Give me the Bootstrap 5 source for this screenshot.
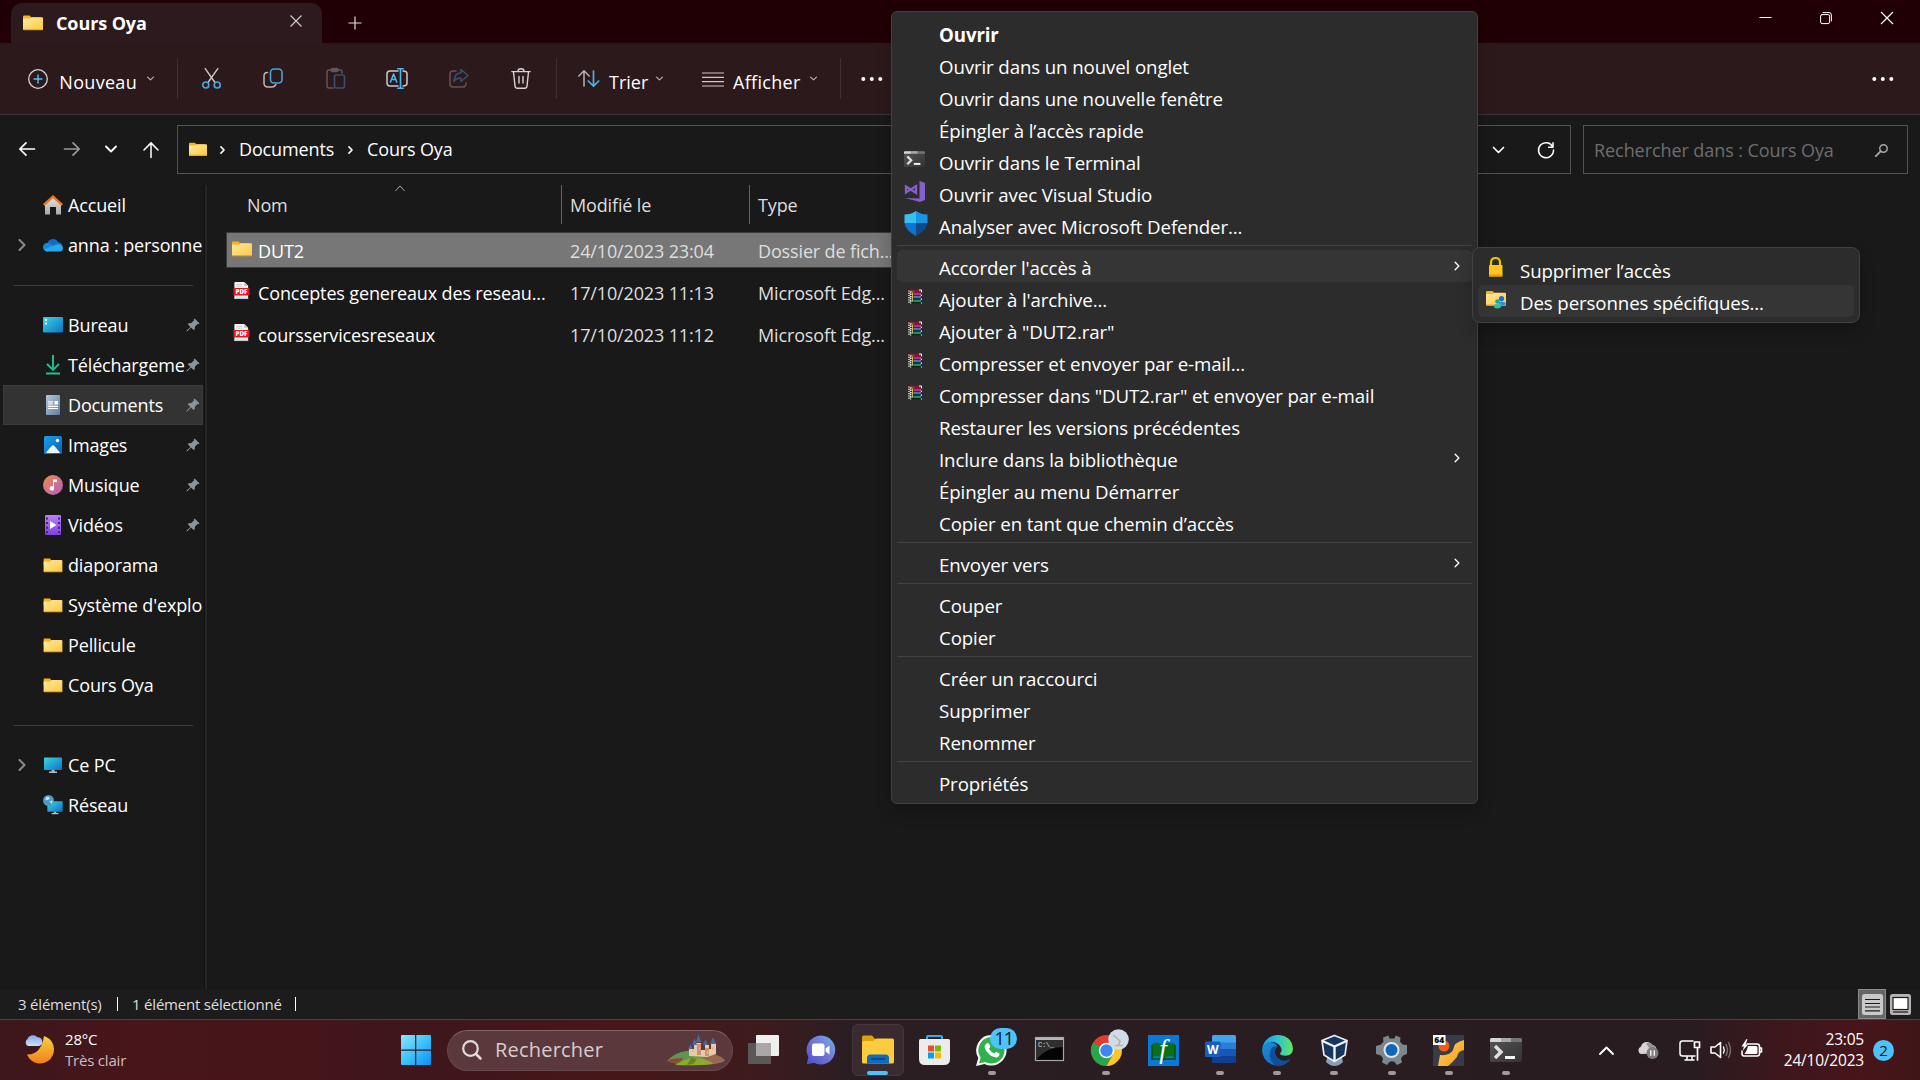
<!DOCTYPE html>
<html lang="fr" data-bs-theme="dark">
<head>
<meta charset="utf-8">
<title>Cours Oya</title>
<link rel="stylesheet" href="https://cdn.jsdelivr.net/npm/bootstrap@5.3.0/dist/css/bootstrap.min.css">
<style>
body{width:1920px;height:1080px;overflow:hidden;background:#191919;color:#fff;font-family:"Open Sans","Noto Sans",sans-serif;font-size:18px;line-height:24px;letter-spacing:-.14px;white-space:nowrap}
svg{display:block;flex:none;overflow:visible}
.ln{fill:none;stroke:currentColor;stroke-linecap:round;stroke-linejoin:round}
.titlebar{height:43px;background:#200004;padding-left:11px}
.tab-strip{height:43px}
.tab-active{width:311px;height:40px;background:#2c1a1e;border-radius:11px 11px 0 0;padding:0 20px 0 12px}
.tab-title{font-weight:700;font-size:18px;padding-bottom:1px;margin-left:13px;letter-spacing:-.1px}
.tab-new{margin:0 0 13px 26px}
.win-ctl{width:61px;height:36px}
.toolbar{height:72px;background:#2c191c;border-bottom:1px solid #3b3637}
.tool{width:62px}
.vsep{width:1px;height:41px;background:#40302f}
.tool-label{font-weight:500;padding-top:7px;letter-spacing:.3px}
.dim{opacity:.38}
.addr-row{height:70px;padding-top:10px}
.box-line{height:49px;border:1px solid #535353}
.crumb-bar{width:1394px}
.crumb-bar span{padding-bottom:2px}
.search-bar{width:325px;color:#6e6e6e}
.side{width:204px;height:804px;padding-left:3px}
.side-edge{width:3px;background:#262626;border-left:1px solid #111}
.side-row{height:40px;width:200px;padding-left:40px}
.side-row.active{background:#333;border:1px solid #3b3b3b;padding-left:39px}
.side-row .twist{width:14px;margin-left:-25px;margin-right:11px}
.side-row .pinned{margin-right:3px}
.side-row.active .pinned{margin-right:2px}
.ic{width:20px;margin-right:5px}
.side-sep{height:40px;padding-top:20px;padding-left:10px}
.side-sep i{display:block;width:180px;height:1px;background:#3c3c3c}
.list{padding-left:19px;width:940px}
.head-row{height:39px;color:#dedede}
.head-row .c1{padding-left:21px;width:336px;border-right:1px solid #636363;height:39px;padding-top:8px}
.head-row .c2{width:188px;border-right:1px solid #636363;padding-left:8px;padding-top:8px;height:39px}
.head-row .c3{padding-left:8px;padding-top:8px}
.sort-mark{left:169px;top:0}
.file-row{height:36px;margin-bottom:6px;border:1px solid transparent;padding:2px 0 0 5px;color:#dedede}
.file-row.sel{background:#777;border-color:#3b3b3b}
.file-row .fi{width:20px;margin-right:6px;margin-top:-5px}
.file-row .fn{width:312px;color:#fff}
.file-row .fd{width:188px}
.status{height:30px;background:#1c1c1c;font-size:15px;line-height:20px;padding-left:18px;padding-right:9px;color:#dedede;letter-spacing:-.2px}
.status b{width:1px;height:14px;background:#fff;display:block}
.view-on{width:28px;height:30px;background:#666;border:1px solid #8b8b8b}
.taskbar{height:61px;border-top:1px solid #51403f;background:linear-gradient(90deg,#3d171a 0,#47151a 130px,#46151a 300px,#3e161c 400px,#461719 620px,#3d1b1d 760px,#2a1e23 850px,#281c21 1690px,#3d171c 1780px,#47151a 1860px,#401519 100%)}
.wx{width:377px;padding-left:24px;font-size:15px;line-height:21px;letter-spacing:-.2px;margin-right:24px}
.find{width:286px;height:41px;border-radius:21px;background:#5b383b;border:1px solid #6a484b;border-top-color:#85656a;color:#d9cccd;padding:0 6px 0 14px;font-size:20px;letter-spacing:.2px;margin-left:16px}
.apps{margin-left:2px}
.app{width:57.1px;height:60px}
.app-on{width:52px;height:52px;border-radius:6px;background:#3a2b30;border:1px solid #44363a}
.run-dot{bottom:5px;left:50%;width:8px;height:4px;margin-left:-4px;border-radius:2px;background:#a3989d}
.run-dot.on{width:21px;margin-left:-10.5px;background:#4cc2ff}
.pill11{left:27px;top:8px;width:27px;height:21px;border-radius:11px;background:#4cc2ff;color:#111;font-size:18px;line-height:21px;letter-spacing:-1px}
.clock{font-size:15.5px;line-height:21px;letter-spacing:-.2px}
.note2{width:21px;height:21px;border-radius:50%;background:#4cc2ff;color:#111;font-size:15px;line-height:20px;margin-left:9px;letter-spacing:0}
.ctx{background:#2c2c2c;border:1px solid #414141;padding:5px;border-radius:6px;box-shadow:0 8px 16px rgba(0,0,0,.22);color:#fff;font-size:18.7px;letter-spacing:-.12px}
.ctx-main{left:891px;top:11px;width:587px;height:793px}
.ctx-sub{left:1472px;top:247px;width:388px;height:76px;border-radius:8px}
.ctx-item{display:flex;align-items:center;height:32px;padding:3px 12px 0 0;border-radius:5px}
.ctx-item.hot{background:#353535}
.ctx-item .gut{width:42px;padding-left:7px;margin-top:-7px}
.ctx-item .more{margin-top:-4px}
.ctx-sub .gut{padding-left:8px}
.ctx-sep{height:1px;margin:4px 0;background:#424242}
</style>
<script src="https://cdn.jsdelivr.net/npm/bootstrap@5.3.0/dist/js/bootstrap.bundle.min.js"></script>
</head>
<body class="d-flex flex-column">
<svg width="0" height="0" class="position-absolute" aria-hidden="true">
<defs>
<linearGradient id="gFold" x1="0" y1="0" x2="1" y2="1"><stop offset="0" stop-color="#ffe9a2"/><stop offset="1" stop-color="#ffc83d"/></linearGradient>
<linearGradient id="gDesk" x1="0" y1="0" x2="1" y2="1"><stop offset="0" stop-color="#35d8e3"/><stop offset="1" stop-color="#0f6fc6"/></linearGradient>
<linearGradient id="gHome" x1="0" y1="0" x2="0" y2="1"><stop offset="0" stop-color="#e8e8e8"/><stop offset="1" stop-color="#a8a8a8"/></linearGradient>
<linearGradient id="gDown" x1="0" y1="0" x2="1" y2="1"><stop offset="0" stop-color="#35d17a"/><stop offset="1" stop-color="#14b0a4"/></linearGradient>
<linearGradient id="gDoc" x1="0" y1="0" x2="1" y2="1"><stop offset="0" stop-color="#b4c8dc"/><stop offset="1" stop-color="#5f7fa0"/></linearGradient>
<linearGradient id="gImg" x1="0" y1="0" x2="1" y2="1"><stop offset="0" stop-color="#1aa0ef"/><stop offset="1" stop-color="#0860b0"/></linearGradient>
<linearGradient id="gMus" x1="0" y1="0" x2="1" y2="1"><stop offset="0" stop-color="#f58a4c"/><stop offset="1" stop-color="#a95fc0"/></linearGradient>
<linearGradient id="gVid" x1="0" y1="0" x2="0" y2="1"><stop offset="0" stop-color="#b583f5"/><stop offset="1" stop-color="#8140e0"/></linearGradient>
<linearGradient id="gWin" x1="0" y1="0" x2="1" y2="1"><stop offset="0" stop-color="#8be6ff"/><stop offset=".5" stop-color="#3dc3fb"/><stop offset="1" stop-color="#0a90f6"/></linearGradient>
<linearGradient id="gChat" x1="1" y1="0" x2="0" y2="1"><stop offset="0" stop-color="#6db2ee"/><stop offset=".5" stop-color="#7473d6"/><stop offset="1" stop-color="#4a4fc9"/></linearGradient>
<linearGradient id="gTerm" x1="0" y1="0" x2="1" y2="1"><stop offset="0" stop-color="#555"/><stop offset="1" stop-color="#333"/></linearGradient>
<linearGradient id="gMoon" x1="0" y1="0" x2="0" y2="1"><stop offset="0" stop-color="#f5d23c"/><stop offset="1" stop-color="#f0801e"/></linearGradient>
<linearGradient id="gCloud" x1="0" y1="0" x2="0" y2="1"><stop offset="0" stop-color="#7fa8ea"/><stop offset="1" stop-color="#cfe0fa"/></linearGradient>
<linearGradient id="gEdge" x1="0" y1="0" x2="1" y2="0"><stop offset="0" stop-color="#1c9be6"/><stop offset=".5" stop-color="#2bc3d6"/><stop offset="1" stop-color="#66e55a"/></linearGradient>
<linearGradient id="gEdge2" x1="0" y1="0" x2="1" y2="1"><stop offset="0" stop-color="#1b8fe0"/><stop offset="1" stop-color="#0c5fb0"/></linearGradient>
<linearGradient id="gOrg" x1="0" y1="0" x2="1" y2="1"><stop offset="0" stop-color="#ffd65a"/><stop offset="1" stop-color="#f59a1c"/></linearGradient>
<symbol id="folder" viewBox="0 0 20 16"><path d="M0 1.6Q0 .6 1 .6H6.6L8.4 2.4H17V8H0Z" fill="#f9b218"/><path d="M.4 3.6H7L8.6 2.2H19Q20 2.2 20 3.2V14Q20 15 19 15H1Q0 15 0 14V4Z" fill="url(#gFold)"/><path d="M0 14Q0 15.2 1 15.2H19Q20 15.2 20 14.2V13.9H0Z" fill="#e9a62a"/></symbol>
<symbol id="chev-d" viewBox="0 0 12 8"><path class="ln" d="M1 1.5 6 6.5 11 1.5"/></symbol>
<symbol id="chev-r" viewBox="0 0 8 12"><path class="ln" d="M1.5 1 6.5 6 1.5 11"/></symbol>
<symbol id="pin" viewBox="0 0 14 14"><path d="M8.6.6 13.4 5.2 12.6 6.2 11.6 6.1 9 8.6 8.7 11.2 7.7 12.1 5 9.4 1.4 13.2.4 13.6.7 12.6 4.4 8.9 1.8 6.2 2.7 5.2 5.4 4.9 7.9 2.4 7.7 1.4Z" fill="#8b949b"/></symbol>
<symbol id="pdf" viewBox="0 0 17 19"><path d="M1 1Q1 0 2 0H11.5L15.5 4V18H1Z" fill="#f4f4f4"/><path d="M11.5 0V4H15.5Z" fill="#bbb"/><path d="M3 2.5H9M3 4.4H9" stroke="#ccc" stroke-width="1"/><rect y="6.3" width="17" height="8" rx=".6" fill="#e5141e"/><path d="M1 16.5H15.5V18H1Z" fill="#c9c9c9"/><text x="8.5" y="12.8" text-anchor="middle" font-size="6.6" font-weight="800" fill="#fff" letter-spacing="0">PDF</text></symbol>
<symbol id="term" viewBox="0 0 32 24"><rect width="32" height="24" rx="1.5" fill="url(#gTerm)"/><path d="M0 4V1.5Q0 0 1.5 0H11V4Z" fill="#d5d5d5"/><path d="M11 0H21V4H11Z" fill="#a8a8a8"/><path d="M21 0H30.5Q32 0 32 1.5V4H21Z" fill="#747474"/><path d="M5 8 11 14 5 20" fill="none" stroke="#e0e0e0" stroke-width="3.4"/><path d="M15 19.5H25" stroke="#f2f2f2" stroke-width="3"/></symbol>
<symbol id="rar" viewBox="0 0 14 14"><path d="M2 0H13V4H2Z" fill="#8c1236"/><path d="M3 1H6V3H3Z" fill="#8c8a10"/><path d="M2 4H13V5.2H2Z" fill="#f05ad0"/><path d="M2 5.2H13V7H2Z" fill="#7a1030"/><path d="M2 7H13V8.2H2Z" fill="#66c8ff"/><path d="M2 8.2H13V11H2Z" fill="#12306a"/><path d="M2 11H13V12.2H2Z" fill="#3ce68c"/><path d="M2 12.2H13V14H2Z" fill="#052a14"/><path d="M5 0V13" stroke="#1a1a1a" stroke-width=".6"/><path d="M4.500 3V12" stroke="#d4d04a" stroke-width=".9"/><path d="M1 1V14M2.600 2V14" stroke="#fff" stroke-width="1.300" stroke-dasharray="1.200 1"/><path d="M11 .5H13.500V3" fill="none" stroke="#fff"/><path d="M13.300 5V14" stroke="#fff" stroke-dasharray="1.500 2.500"/></symbol>
<symbol id="screen" viewBox="0 0 20 16"><rect x="1" y=".5" width="18" height="12.5" rx=".8" fill="url(#gDesk)"/><path d="M8.5 13H11.5V14.6H14V16H6V14.6H8.5Z" fill="#b3bcc4"/></symbol>
</defs>
</svg>

<header class="titlebar d-flex align-items-start">
  <div class="tab-strip d-flex align-items-end">
    <div class="tab-active d-flex align-items-center">
      <svg width="20" height="16"><use href="#folder"/></svg>
      <span class="tab-title me-auto">Cours Oya</span>
      <svg width="12" height="12" class="mb-1" stroke="#cfcacb"><path d="M.5.5 11.5 11.5M11.5.5.5 11.5" stroke-width="1.2"/></svg>
    </div>
    <svg width="14" height="14" class="tab-new" stroke="#e0dcdc"><path d="M7 .5V13.5M.5 7H13.5" stroke-width="1.2"/></svg>
  </div>
  <div class="d-flex ms-auto" style="padding-right:3px">
    <div class="win-ctl d-flex align-items-center justify-content-center"><svg width="12" height="12" stroke="#fff"><path d="M.5 5.5H12.5"/></svg></div>
    <div class="win-ctl d-flex align-items-center justify-content-center"><svg width="12" height="12" class="ln"><rect x=".6" y="2.6" width="9" height="9" rx="1.5"/><path d="M3 .6H9Q11.4.6 11.4 3V9"/></svg></div>
    <div class="win-ctl d-flex align-items-center justify-content-center"><svg width="12" height="12" stroke="#fff"><path d="M0 0 12 12M12 0 0 12" stroke-width="1.2"/></svg></div>
  </div>
</header>

<div class="toolbar d-flex align-items-center">
  <div class="d-flex align-items-center" style="width:177px;padding-left:28px">
    <svg width="20" height="20" class="ln" style="color:#d8d2d3"><circle cx="10" cy="10" r="9.3" stroke-width="1.3"/><path d="M10 6V14M6 10H14" stroke="#4cc2ff" stroke-width="1.4"/></svg>
    <span class="tool-label ms-auto">Nouveau</span>
    <svg width="7" height="5" style="margin:0 23px 0 10px;color:#b9b0b2"><use href="#chev-d" stroke-width="2"/></svg>
  </div>
  <div class="vsep"></div>
  <div class="d-flex" style="margin-left:2px;padding-bottom:1px">
    <div class="tool d-flex justify-content-center"><svg width="19" height="21" class="ln" style="color:#cfc9ca"><path d="M3.2.6 13 14.5M15.8.6 6 14.5" stroke-width="1.4"/><g stroke="#45a5dc" stroke-width="1.7"><circle cx="3.8" cy="17" r="3"/><circle cx="15.2" cy="17" r="3"/></g></svg></div>
    <div class="tool d-flex justify-content-center"><svg width="20" height="20" class="ln" style="color:#bdb5b6"><path d="M4.5 4.5Q1 4.5 1 8V15Q1 19 5 19H8.500Q12 19 12.800 16.500" stroke-width="1.5"/><rect x="7.500" y="1" width="11.500" height="14" rx="3.500" stroke="#45a5dc" stroke-width="1.600"/></svg></div>
    <div class="tool d-flex justify-content-center dim"><svg width="19" height="21" class="ln" style="color:#bdb5b6"><path d="M7 20H3Q1 20 1 18V4Q1 2 3 2H14Q16 2 16 4V5M5 2Q5 .6 6.500.6H10.500Q12 .6 12 2T10.500 3.600H6.500Q5 3.600 5 2" stroke-width="1.500"/><rect x="8.500" y="7" width="10" height="13" rx="2" stroke="#4aa8e8" stroke-width="1.600"/></svg></div>
    <div class="tool d-flex justify-content-center"><svg width="22" height="21" class="ln" style="color:#cfc9ca"><path d="M12 3H4Q1 3 1 6V15Q1 18 4 18H12M17 3Q21 3 21 6V15Q21 18 17 18" stroke-width="1.500"/><path d="M14.500.8V20.200M11.800.8H17.200M11.800 20.200H17.200M4.500 14 7.600 6 10.700 14M5.500 11.500H9.700" stroke="#4cb8f0" stroke-width="1.600"/></svg></div>
    <div class="tool d-flex justify-content-center dim"><svg width="20" height="20" class="ln" style="color:#bdb5b6"><path d="M7 3H4Q1 3 1 6V16Q1 19 4 19H14Q17 19 17 15" stroke-width="1.500"/><path d="M12 1.500 19 7.500 12 13.500V10.200Q7 9.800 4.800 13.500 5.500 5.200 12 4.800Z" stroke="#4aa8e8" stroke-width="1.600"/></svg></div>
    <div class="tool d-flex justify-content-center"><svg width="20" height="21" class="ln" style="color:#d8d2d3"><path d="M.8 3.600H19.200M7 3.200Q7 .8 10 .8T13 3.200M2.500 4 4 18Q4.200 20.200 6.200 20.200H13.800Q15.800 20.200 16 18L17.500 4M8 8.500V15M12 8.500V15" stroke-width="1.400"/></svg></div>
  </div>
  <div class="vsep" style="margin-left:4px"></div>
  <svg width="22" height="17" class="ln" style="margin-left:21px;color:#b9b0b2"><path d="M6 16V1M.8 6 6 .8 11.200 6" stroke-width="1.500"/><path d="M15.500 1V16M10.300 11 15.500 16.200 20.700 11" stroke="#4cb0ea" stroke-width="1.700"/></svg>
  <span class="tool-label" style="margin-left:9px;width:47px;letter-spacing:0">Trier</span>
  <svg width="7" height="5" style="color:#b9b0b2"><use href="#chev-d" stroke-width="2"/></svg>
  <svg width="22" height="15" style="margin-left:39px;margin-top:2px" stroke="#cfc9ca"><path d="M0 1H22M0 5.300H22M0 9.600H22M0 14H22" stroke-width="1.200"/></svg>
  <span class="tool-label" style="margin-left:9px;width:77px">Afficher</span>
  <svg width="7" height="5" style="color:#b9b0b2"><use href="#chev-d" stroke-width="2"/></svg>
  <div class="vsep" style="margin-left:23px"></div>
  <svg width="22" height="4" style="margin-left:20px" fill="#fff"><circle cx="2.300" cy="2" r="2"/><circle cx="10.800" cy="2" r="2"/><circle cx="19.300" cy="2" r="2"/></svg>
  <svg width="22" height="4" class="ms-auto" style="margin-right:26px" fill="#fff"><circle cx="2.300" cy="2" r="2"/><circle cx="10.800" cy="2" r="2"/><circle cx="19.300" cy="2" r="2"/></svg>
</div>

<div class="addr-row d-flex align-items-start">
  <div class="d-flex align-items-center" style="height:48px;width:177px;padding-left:19px">
    <svg width="16" height="14" class="ln"><path d="M15.500 7H1M7 .8.8 7 7 13.200" stroke-width="1.700"/></svg>
    <svg width="16" height="14" class="ln" style="margin-left:29px;color:#9a9a9a"><path d="M.5 7H15M9 .8 15.200 7 9 13.200" stroke-width="1.700"/></svg>
    <svg width="12" height="8" style="margin-left:25px"><use href="#chev-d" stroke-width="1.800"/></svg>
    <svg width="16" height="16" class="ln" style="margin-left:26px;margin-top:2px"><path d="M8 15.500V1M1 8 8 .9 15 8" stroke-width="1.500"/></svg>
  </div>
  <div class="box-line crumb-bar d-flex align-items-center" style="padding-left:11px">
    <svg width="18" height="15"><use href="#folder"/></svg>
    <svg width="5" height="8" style="margin-left:13px"><use href="#chev-r" stroke-width="2.500"/></svg>
    <span style="margin-left:14px;width:97px">Documents</span>
    <svg width="5" height="8" style="margin-left:12px"><use href="#chev-r" stroke-width="2.500"/></svg>
    <span style="margin-left:14px">Cours Oya</span>
    <svg width="13" height="8" class="ms-auto"><use href="#chev-d" stroke-width="1.700"/></svg>
    <svg width="16" height="16" class="ln" style="margin:0 16px 0 33px"><path d="M14.800 5A7.500 7.500 0 1 0 15.500 8M15 .8V5.200H10.600" stroke-width="1.500"/></svg>
  </div>
  <div class="box-line search-bar d-flex align-items-center justify-content-between" style="margin-left:12px;padding:1px 19px 0 10px">
    <span style="letter-spacing:-.07px">Rechercher dans : Cours Oya</span>
    <svg width="13" height="13" class="ln" style="color:#a8a8a8"><circle cx="8.500" cy="4.500" r="3.700" stroke-width="1.500"/><path d="M5.800 7.200.8 12.200" stroke-width="1.900"/></svg>
  </div>
</div>

<main class="d-flex" style="height:804px">
  <nav class="side">
    <div class="side-row d-flex align-items-center"><div class="ic"><svg width="20" height="20"><path d="M2 9 10 1.500 18 9V19.500H13V12H7V19.500H2Z" fill="url(#gHome)"/><path d="M.8 10 10 1.600 19.200 10" fill="none" stroke="#f0761c" stroke-width="2.400"/></svg></div>Accueil</div>
    <div class="side-row d-flex align-items-center"><svg class="twist" width="8" height="12" style="color:#8a8a8a"><use href="#chev-r" stroke-width="2" width="8" height="12"/></svg><div class="ic"><svg width="20" height="14"><path d="M5 13.500A4.500 4.500 0 0 1 2 5.800Q3.500 5 4.500 5A6 6 0 0 1 15.300 4Q19 5 19.500 8L12 10Z" fill="#0f6cc9"/><path d="M4 13.500A4.200 4.200 0 0 1 4.500 5Q7 5 8.500 6.500L16 11Z" fill="#1787dc"/><path d="M4 13.500Q1.500 13.200 1 11.500L12.500 6.800Q14 6 15.800 6.200 19.800 6.800 20 10.200 19.700 13.500 16.500 13.500Z" fill="#28a8ea"/></svg></div><span>anna : personne</span></div>
    <div class="side-sep"><i></i></div>
    <div class="side-row d-flex align-items-center"><div class="ic"><svg width="20" height="16"><rect width="20" height="15.500" rx="1" fill="url(#gDesk)"/><path d="M2 2H4V4H2ZM2 5.500H4V7.500H2Z" fill="#fff"/></svg></div><span class="me-auto">Bureau</span><svg class="pinned" width="14" height="14"><use href="#pin"/></svg></div>
    <div class="side-row d-flex align-items-center"><div class="ic"><svg width="20" height="20" fill="none" stroke="url(#gDown)"><path d="M10 0V15M4 9 10 15 16 9" stroke-width="1.900"/><path d="M3 18.500H17" stroke="#22c08c" stroke-width="2"/></svg></div><span class="me-auto">Téléchargeme</span><svg class="pinned" width="14" height="14"><use href="#pin"/></svg></div>
    <div class="side-row active d-flex align-items-center"><div class="ic"><svg width="20" height="20"><rect x="3" width="14" height="20" rx="1" fill="url(#gDoc)"/><path d="M5 6.800H10M5 9H10M5 11.300H15M5 13.500H15" stroke="#fff" stroke-width="1.200"/><path d="M11.500 6H15V9.500H11.500Z" fill="#fff"/></svg></div><span class="me-auto">Documents</span><svg class="pinned" width="14" height="14"><use href="#pin"/></svg></div>
    <div class="side-row d-flex align-items-center"><div class="ic"><svg width="20" height="18"><rect x="1" width="18" height="18" rx="1.500" fill="url(#gImg)"/><path d="M3 16.500 8.600 10Q10 8.600 11.400 10L17 16.500Q16 17 15 17H5Z" fill="#eaf5ff"/><circle cx="14.500" cy="4.500" r="1.700" fill="#fff"/></svg></div><span class="me-auto">Images</span><svg class="pinned" width="14" height="14"><use href="#pin"/></svg></div>
    <div class="side-row d-flex align-items-center"><div class="ic"><svg width="20" height="20"><circle cx="10" cy="10" r="10" fill="url(#gMus)"/><path d="M10 4.500H14V7H11V13.500A2.200 2.200 0 1 1 10 11.600Z" fill="#fff"/></svg></div><span class="me-auto">Musique</span><svg class="pinned" width="14" height="14"><use href="#pin"/></svg></div>
    <div class="side-row d-flex align-items-center"><div class="ic"><svg width="20" height="20"><rect x="2" width="16" height="20" rx="1.200" fill="url(#gVid)"/><path d="M4 2.500V18.500M16 2.500V18.500" stroke="#45208c" stroke-width="2" stroke-dasharray="2 2.600"/><path d="M7 6 13.500 10 7 14Z" fill="#fff"/></svg></div><span class="me-auto">Vidéos</span><svg class="pinned" width="14" height="14"><use href="#pin"/></svg></div>
    <div class="side-row d-flex align-items-center"><div class="ic"><svg width="20" height="15"><use href="#folder"/></svg></div>diaporama</div>
    <div class="side-row d-flex align-items-center"><div class="ic"><svg width="20" height="15"><use href="#folder"/></svg></div><span>Système d'explo</span></div>
    <div class="side-row d-flex align-items-center"><div class="ic"><svg width="20" height="15"><use href="#folder"/></svg></div>Pellicule</div>
    <div class="side-row d-flex align-items-center"><div class="ic"><svg width="20" height="15"><use href="#folder"/></svg></div>Cours Oya</div>
    <div class="side-sep"><i></i></div>
    <div class="side-row d-flex align-items-center"><svg class="twist" width="8" height="12" style="color:#8a8a8a"><use href="#chev-r" stroke-width="2" width="8" height="12"/></svg><div class="ic"><svg width="20" height="16"><use href="#screen"/></svg></div>Ce PC</div>
    <div class="side-row d-flex align-items-center"><div class="ic"><svg width="20" height="20"><use href="#screen" x="3.500" y="5" width="17" height="15"/><circle cx="5.500" cy="5.500" r="5.500" fill="#4a9cc8"/><path d="M3 2Q6 1 7 3.500 4.500 6 2.500 5ZM6.500 6.500 9.500 5.500 9 9Z" fill="#c5e6f2"/></svg></div>Réseau</div>
  </nav>
  <div class="side-edge"></div>
  <section class="list">
    <div class="head-row d-flex position-relative">
      <svg class="sort-mark position-absolute ln" width="10" height="6" style="color:#a8a8a8"><path d="M.8 5.500 5 1 9.200 5.500"/></svg>
      <div class="c1">Nom</div><div class="c2">Modifié le</div><div class="c3">Type</div>
    </div>
    <div style="height:8px"></div>
    <div class="file-row sel d-flex align-items-center"><div class="fi"><svg width="20" height="16"><use href="#folder"/></svg></div><div class="fn">DUT2</div><div class="fd">24/10/2023 23:04</div><div>Dossier de fich...</div></div>
    <div class="file-row d-flex align-items-center"><div class="fi"><svg width="17" height="18" style="margin-left:1px"><use href="#pdf"/></svg></div><div class="fn">Conceptes genereaux des reseau...</div><div class="fd">17/10/2023 11:13</div><div>Microsoft Edg...</div></div>
    <div class="file-row d-flex align-items-center"><div class="fi"><svg width="17" height="18" style="margin-left:1px"><use href="#pdf"/></svg></div><div class="fn">coursservicesreseaux</div><div class="fd">17/10/2023 11:12</div><div>Microsoft Edg...</div></div>
  </section>
</main>

<footer class="status d-flex align-items-center">
  <span style="width:99px">3 élément(s)</span><b></b><span style="margin-left:14px;width:163px">1 élément sélectionné</span><b></b>
  <div class="view-on ms-auto d-flex align-items-center justify-content-center"><svg width="21" height="21"><rect width="21" height="21" rx="2.500" fill="#c9c9c9"/><path d="M3 5.500H18M3 9.500H18M3 13H18M3 16.800H18" stroke="#1a1a1a" stroke-width="1.200"/></svg></div>
  <svg width="21" height="21" style="margin-left:4px"><rect width="21" height="21" rx="2.500" fill="#b5b5b5"/><rect x="3" y="3.500" width="15" height="12" fill="#fff" stroke="#1a1a1a" stroke-width="1.200"/><path d="M3 18H18" stroke="#1a1a1a" stroke-width="1.200"/></svg>
</footer>

<div class="taskbar d-flex align-items-center">
  <div class="wx d-flex align-items-center">
    <svg width="30" height="30" style="margin-top:-3px"><path d="M20 2A14 14 0 1 1 3 20.500Q17 21 20 2Z" fill="url(#gMoon)"/><path d="M4 12A4 4 0 0 1 3.500 5 6 6 0 0 1 13.500 3.200 4.500 4.500 0 0 1 15 12Z" fill="url(#gCloud)"/></svg>
    <div style="margin-left:11px"><div>28°C</div><div style="color:#cdbfc0">Très clair</div></div>
  </div>
  <svg width="30" height="30"><path d="M0 1Q0 0 1 0H14V14.500H0ZM15.300 0H29Q30 0 30 1V14.500H15.300ZM0 15.800H14V30H1Q0 30 0 29ZM15.300 15.800H30V29Q30 30 29 30H15.300Z" fill="url(#gWin)"/></svg>
  <div class="find d-flex align-items-center">
    <svg width="20" height="20" class="ln" style="color:#e3dadb"><circle cx="8.500" cy="8.500" r="7.300" stroke-width="2.200"/><path d="M14 14 18.500 18.500" stroke-width="2.600"/></svg>
    <span style="margin-left:13px;padding-top:0">Rechercher</span>
    <svg class="ms-auto" width="59" height="32"><path d="M0 27Q8 18 20 17 34 14 44 20 54 23 58 27 50 31 30 31 12 32 0 27Z" fill="#5f9455"/><path d="M34 19Q50 18 58 26 54 30 40 30Z" fill="#9c6650"/><path d="M0 27Q5 24 16 24 14 29 8 29 2 29 0 27Z" fill="#8c4a30"/><path d="M14 28Q24 22 36 25 46 28 46 30 30 32 8 31Z" fill="#8cab2b"/><path d="M24 24 30 25 26 30 20 31Z" fill="#6d7f20"/><path d="M22 22V15H27V9H34V16H38V11H42V15H44V9H49V20L40 23Z" fill="#e8c9aa"/><path d="M30 10H34V21H30ZM38 14H42V22H38Z" fill="#c99376"/><path d="M25 11 27.500 4 30 11ZM29 8 31.500 0 34 8ZM36 11 38.500 5 41 11ZM43 10 46 3 49 10ZM21 15 23.500 10 26 15Z" fill="#48699e"/><path d="M25 15H26.500V18H25ZM32 13H33V16H32ZM45 13H46.500V16H45ZM40 17H41.500V20H40Z" fill="#f4b544"/></svg>
  </div>
  <div class="apps d-flex">
    <div class="app d-flex align-items-center justify-content-center"><svg width="31" height="29" style="margin-top:-2px"><rect x="8" y="0" width="23" height="21" rx="1" fill="#efefef"/><rect x="0" y="8" width="23" height="21" rx="1" fill="#5f5d5d" fill-opacity=".93"/><path d="M8 8H23V21H8Z" fill="#a9a7a7"/></svg></div>
    <div class="app d-flex align-items-center justify-content-center"><svg width="30" height="30" style="margin-top:-1px"><path d="M15 .5A14.500 14.500 0 1 1 8 27.800L.800 29.300 2.300 22A14.500 14.500 0 0 1 15 .5Z" fill="url(#gChat)"/><rect x="6" y="8.500" width="12.500" height="12.500" rx="2" fill="#fff"/><path d="M19.500 13.500 23.500 10.500V19.500L19.500 16.500Z" fill="#fff"/></svg></div>
    <div class="app d-flex align-items-center justify-content-center position-relative"><div class="app-on d-flex align-items-center justify-content-center"><svg width="32" height="30"><path d="M0 2Q0 .5 1.500.5H10L13 4H30V12H0Z" fill="#dfa00c"/><path d="M0 7.500Q0 6 1.500 6H11L14 3.500H30.500Q32 3.500 32 5V27Q32 28.500 30.500 28.500H1.500Q0 28.500 0 27Z" fill="#fccb3e"/><path d="M5 28.500V23Q5 19.500 8.500 19.500H23.500Q27 19.500 27 23V28.500Z" fill="#0d6cbd"/><path d="M9 24H23" stroke="#0a3a78" stroke-width="1.300"/></svg></div><i class="run-dot on position-absolute"></i></div>
    <div class="app d-flex align-items-center justify-content-center"><svg width="31" height="30"><path d="M8 6V2Q8 1 9 1H22Q23 1 23 2V6" fill="none" stroke="#2cb0e8" stroke-width="2"/><path d="M1.500 4H29.500Q31 4 31 5.500V24Q31 30 25 30H6Q0 30 0 24V5.500Q0 4 1.500 4Z" fill="#ececec"/><path d="M9 10.500H15V16.500H9Z" fill="#f04e1f"/><path d="M16 10.500H22V16.500H16Z" fill="#7cb900"/><path d="M9 17.500H15V23.500H9Z" fill="#00a2ec"/><path d="M16 17.500H22V23.500H16Z" fill="#fcb800"/></svg></div>
    <div class="app d-flex align-items-center justify-content-center position-relative"><svg width="31" height="31"><path d="M16 0A15.300 15.300 0 1 1 8.500 29L0 31 2.300 23A15.300 15.300 0 0 1 16 0Z" fill="#fff"/><path d="M16 2A13.300 13.300 0 1 1 9 27L3 28.400 4.600 22.600A13.300 13.300 0 0 1 16 2Z" fill="#2fb24b"/><path d="M10.500 8.500Q12.500 7 13.500 9.500L14.400 11.700 12.900 13.800Q15 17.500 18.300 18.600L20.200 16.700 23.500 18.400Q23.700 21.500 20.500 22.400 16 22.500 12 18 8 13.500 8.700 10.700Z" fill="#fff"/></svg><span class="pill11 position-absolute text-center">11</span><i class="run-dot position-absolute"></i></div>
    <div class="app d-flex align-items-center justify-content-center"><svg width="29" height="24" style="margin-top:-3px"><rect x=".5" y=".5" width="28" height="23" fill="#050505" stroke="#a4a7ab" stroke-width="1.200"/><path d="M1 1H28V10Q12 10 2 22H1Z" fill="#2f2f2f"/><path d="M1 1H28V3H1Z" fill="#b5b8bc"/><text x="3" y="10" font-size="7" fill="#ddd" font-family="Liberation Mono,monospace" letter-spacing="-.3">C:\_</text></svg></div>
    <div class="app d-flex align-items-center justify-content-center position-relative"><svg width="31" height="31"><circle cx="15.500" cy="15.500" r="15.500" fill="#e33b2e"/><path d="M15.500 15.500 2.100 7.700A15.500 15.500 0 0 0 15.500 31L22.200 19.500Z" fill="#27a64b"/><path d="M15.500 31A15.500 15.500 0 0 0 29 8H15.500L22 19.500Z" fill="#fcc727"/><circle cx="15.500" cy="15.500" r="7.700" fill="#fff"/><circle cx="15.500" cy="15.500" r="6.200" fill="#3f86f2"/><circle cx="27.500" cy="4.500" r="10.300" fill="#cfdcea"/><path d="M22 0 29 6 27.500 10.500M24 10.500H32" stroke="#c2b299" stroke-width="1.600" fill="none"/></svg><i class="run-dot position-absolute"></i></div>
    <div class="app d-flex align-items-center justify-content-center"><svg width="31" height="31"><rect width="31" height="31" fill="#0a78d6"/><path d="M4 9Q10 6 15.500 10 21 6 27 9V22Q21 20 15.500 23.500 10 20 4 22Z" fill="#0a7018"/><path d="M4 10V24H14.500L15.500 25 16.500 24H27V10" fill="none" stroke="#064d0e" stroke-width="1.500"/><text x="15" y="23" text-anchor="middle" font-family="Liberation Serif,serif" font-style="italic" font-size="27" fill="#fff">f</text></svg></div>
    <div class="app d-flex align-items-center justify-content-center position-relative"><svg width="31" height="28" style="margin-top:-2px"><rect x="7" width="24" height="28" rx="1.500" fill="#1a56b8"/><path d="M7 8V1.500Q7 0 8.500 0H29.500Q31 0 31 1.500V8Z" fill="#41a5ee"/><path d="M7 7.500H31V14H7Z" fill="#2b7cd3"/><path d="M7 21H31V26.500Q31 28 29.500 28H8.500Q7 28 7 26.500Z" fill="#103f91"/><rect x="0" y="6.500" width="15.500" height="15.500" rx="1.200" fill="#1b5dbe"/><text x="7.700" y="18.600" text-anchor="middle" font-size="12" font-weight="700" fill="#fff" letter-spacing="0">W</text></svg><i class="run-dot position-absolute"></i></div>
    <div class="app d-flex align-items-center justify-content-center position-relative"><svg width="31" height="31"><path d="M.2 13.500A15.500 15.500 0 0 0 28 24.500Q23 27 18.500 25 12 21.500 13 15 13.500 12.500 15.500 11.500 13 7 8 7 2.500 7.500.2 13.500Z" fill="url(#gEdge2)"/><path d="M9 14Q5 24 13.500 30.500 23 32.500 28.500 24 23 27 18.500 25 12 21.500 13 15 14 12 15.500 11.500 11 10.500 9 14Z" fill="#0f4f9a"/><path d="M.2 13.500A15.500 15.500 0 0 1 15.500 0Q30 .5 31 14 30.500 20.500 23.500 20.800 18 20.500 18 18.500 20 16.500 19.500 14 17.500 7.500 10 6.800 3.500 7 .2 13.500Z" fill="url(#gEdge)"/></svg><i class="run-dot position-absolute"></i></div>
    <div class="app d-flex align-items-center justify-content-center position-relative"><svg width="27" height="31"><path d="M6 23H21L22 27Q18 31 13.500 31T5 27Z" fill="#8b9cb8"/><path d="M13.500.5 26 5.500 24 20 13.500 26.500 3 20 1 5.500Z" fill="#16365f" stroke="#e7edf5" stroke-width="1.700"/><path d="M1.500 6 13.500 11.500 25.500 6M13.500 11.500V26" fill="none" stroke="#f2f5fa" stroke-width="2.400"/></svg><i class="run-dot position-absolute"></i></div>
    <div class="app d-flex align-items-center justify-content-center position-relative"><svg width="32" height="30"><path d="M12.500 0.500 13.500 3.500H18.500L19.500.5 24.500 2.500 24 6.500 26.500 9.500 31 10V19L27 20.500 25 23.500 26 27.500 21 30 18 26.500H14L11 30 6 27.500 7 23.500 5 20.500 0 19V11L5 9.500 7.500 6.500 7 2.500Z" fill="#7b868d"/><circle cx="15.500" cy="15" r="8" fill="#e2e6e8"/><circle cx="15.500" cy="15" r="6" fill="#0f66b8"/></svg><i class="run-dot position-absolute"></i></div>
    <div class="app d-flex align-items-center justify-content-center position-relative"><svg width="31" height="31"><rect width="31" height="31" rx="1" fill="#393c46"/><circle cx="11" cy="11" r="5.500" fill="#f25c14"/><path d="M5 31 7 20Q17 21 20 15 21 7 31 5V15Q25 16 24 22 20 27 15 31Z" fill="url(#gOrg)"/><rect width="12.500" height="10" fill="#fff"/><text x="6.300" y="8.400" text-anchor="middle" font-size="8.500" font-weight="800" fill="#111" letter-spacing="0">64</text></svg><i class="run-dot position-absolute"></i></div>
    <div class="app d-flex align-items-center justify-content-center position-relative"><svg width="32" height="24"><use href="#term"/></svg><i class="run-dot position-absolute"></i></div>
  </div>
  <svg width="15" height="9" class="ln" style="margin-left:65px"><path d="M1 8 7.500 1.500 14 8" stroke-width="1.900"/></svg>
  <svg width="22" height="18" style="margin-left:23px"><path d="M4 13A4 4 0 0 1 4 5.500 6 6 0 0 1 15 4 4.500 4.500 0 0 1 17 12.500Z" fill="#d9d5d7"/><path d="M9 2.500A6 6 0 0 1 16 4 4.500 4.500 0 0 1 17 12Q12 8 9 2.500Z" fill="#989396"/><circle cx="15.500" cy="12" r="6" fill="#7f7c7e"/><path d="M13.800 9.300V14.700M17.200 9.300V14.700" stroke="#fff" stroke-width="1.300"/></svg>
  <svg width="22" height="21" class="ln" style="margin-left:20px"><path d="M14 1H3.500Q1 1 1 3.500V13.500Q1 16 3.500 16H16M6 20H15M8 16V20M13 16V20" stroke-width="1.500"/><path d="M15.500 2H20.500V7.500H15.500ZM18.500 8V20" stroke-width="1.700"/></svg>
  <svg width="21" height="18" class="ln" style="margin-left:9px"><path d="M1 6H5L10.500 1.500V16.500L5 12H1Z" stroke-width="1.600"/><path d="M13.500 6Q15 9 13.500 12" stroke-width="1.400"/><path d="M16 3.500Q19 9 16 14.500M18.500 1.500Q22.500 9 18.500 16.500" stroke="#7c6b70" stroke-width="1.400"/></svg>
  <svg width="21" height="17" style="margin-left:10px;margin-top:-3px"><path d="M6 4H16Q18.500 4 18.500 6.500V13.500Q18.500 16 16 16H3Q1 16 1 13.500V11M18.800 8H20.500V12H18.800" class="ln" stroke-width="1.600"/><path d="M7 6H15Q16.500 6 16.500 7.500V12.500Q16.500 14 15 14H3.500L6 9.500Z" fill="#fff"/><path d="M5.500-1 .5 6.500H3L1.500 11 7 4.500H4.500L6.500-.5Z" fill="#fff"/></svg>
  <div class="clock text-end ms-auto"><div>23:05</div><div>24/10/2023</div></div>
  <div class="note2 text-center" style="margin-right:26px">2</div>
</div>

<div class="ctx ctx-main position-absolute">
  <div class="ctx-item"><span class="gut"></span><span class="fw-bold">Ouvrir</span></div>
  <div class="ctx-item"><span class="gut"></span>Ouvrir dans un nouvel onglet</div>
  <div class="ctx-item"><span class="gut"></span>Ouvrir dans une nouvelle fenêtre</div>
  <div class="ctx-item"><span class="gut"></span>Épingler à l’accès rapide</div>
  <div class="ctx-item"><span class="gut"><svg width="21" height="16"><use href="#term"/></svg></span>Ouvrir dans le Terminal</div>
  <div class="ctx-item"><span class="gut"><svg width="22" height="21"><path d="M16 0 21 2V19L16 21 1 17 15.500 17.500V0Z" fill="#8560c8"/><path d="M2 5.500 12 12V5L2 11.500Z" fill="none" stroke="#8560c8" stroke-width="2.300"/></svg></span>Ouvrir avec Visual Studio</div>
  <div class="ctx-item"><span class="gut"><svg width="24" height="25"><path d="M12 0Q17 3.500 23.500 3.500V12H12Z" fill="#1795e6"/><path d="M12 0Q7 3.500.5 3.500V12H12Z" fill="#35c1f1"/><path d="M.5 12H12V25Q1 19 .5 12Z" fill="#0d75cf"/><path d="M23.500 12H12V25Q23 19 23.500 12Z" fill="#114a8b"/></svg></span>Analyser avec Microsoft Defender...</div>
  <div class="ctx-sep"></div>
  <div class="ctx-item hot"><span class="gut"></span><span class="me-auto">Accorder l'accès à</span><svg class="more" width="6" height="10"><use href="#chev-r" stroke-width="1.700"/></svg></div>
  <div class="ctx-item"><span class="gut"><svg width="14" height="15" style="margin-left:4px"><use href="#rar"/></svg></span>Ajouter à l'archive...</div>
  <div class="ctx-item"><span class="gut"><svg width="14" height="15" style="margin-left:4px"><use href="#rar"/></svg></span>Ajouter à "DUT2.rar"</div>
  <div class="ctx-item"><span class="gut"><svg width="14" height="15" style="margin-left:4px"><use href="#rar"/></svg></span>Compresser et envoyer par e-mail...</div>
  <div class="ctx-item"><span class="gut"><svg width="14" height="15" style="margin-left:4px"><use href="#rar"/></svg></span>Compresser dans "DUT2.rar" et envoyer par e-mail</div>
  <div class="ctx-item"><span class="gut"></span>Restaurer les versions précédentes</div>
  <div class="ctx-item"><span class="gut"></span><span class="me-auto">Inclure dans la bibliothèque</span><svg class="more" width="6" height="10"><use href="#chev-r" stroke-width="1.700"/></svg></div>
  <div class="ctx-item"><span class="gut"></span>Épingler au menu Démarrer</div>
  <div class="ctx-item"><span class="gut"></span>Copier en tant que chemin d’accès</div>
  <div class="ctx-sep"></div>
  <div class="ctx-item"><span class="gut"></span><span class="me-auto">Envoyer vers</span><svg class="more" width="6" height="10"><use href="#chev-r" stroke-width="1.700"/></svg></div>
  <div class="ctx-sep"></div>
  <div class="ctx-item"><span class="gut"></span>Couper</div>
  <div class="ctx-item"><span class="gut"></span>Copier</div>
  <div class="ctx-sep"></div>
  <div class="ctx-item"><span class="gut"></span>Créer un raccourci</div>
  <div class="ctx-item"><span class="gut"></span>Supprimer</div>
  <div class="ctx-item"><span class="gut"></span>Renommer</div>
  <div class="ctx-sep"></div>
  <div class="ctx-item"><span class="gut"></span>Propriétés</div>
</div>

<div class="ctx ctx-sub position-absolute">
  <div class="ctx-item"><span class="gut"><svg width="20" height="20"><path d="M5 9V5.500Q5 1 9.500 1T14 5.500V9" fill="none" stroke="#e8c800" stroke-width="2.200"/><rect x="3" y="8" width="13.500" height="11.500" rx="1" fill="#ffc41e"/><path d="M3 17.500H16.500V19.500H3Z" fill="#e89a10"/></svg></span>Supprimer l’accès</div>
  <div class="ctx-item hot"><span class="gut"><svg width="20" height="18"><use href="#folder" width="20" height="17"/><circle cx="15.500" cy="8.500" r="2.600" fill="#1673c8"/><path d="M12.500 13Q13 11.500 15.500 11.500T20 13Q19 16 15.500 15.500Z" fill="#2292dc"/><circle cx="11.500" cy="11.500" r="2.300" fill="#18a89c"/><path d="M7.500 16Q8 14 11.500 14T15.500 16Q14.500 18.500 11.500 18.500T7.500 16Z" fill="#2cc0a8"/></svg></span>Des personnes spécifiques...</div>
</div>
</body>
</html>
